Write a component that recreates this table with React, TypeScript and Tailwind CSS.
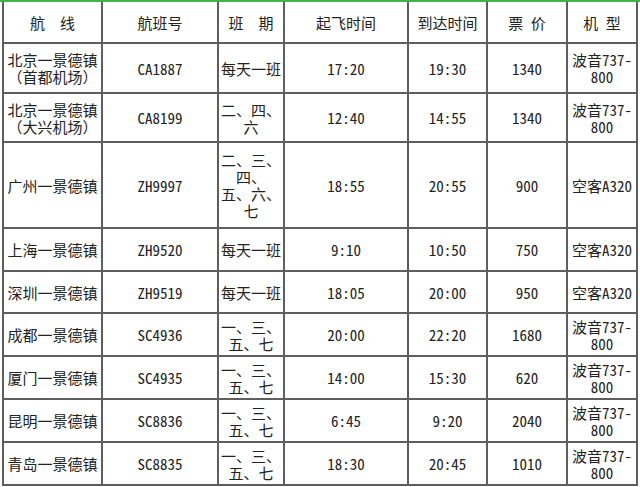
import React from "react";

type Row = {
  route: string[];
  no: string;
  sched: string[];
  dep: string;
  arr: string;
  price: string;
  type: string[];
};

const boeing = ["波音737-", "800"];
const airbus = ["空客A320"];
const wk = ["一、三、", "五、七"];

const rows: Row[] = [
  { route: ["北京一景德镇", "（首都机场）"], no: "CA1887", sched: ["每天一班"], dep: "17:20", arr: "19:30", price: "1340", type: boeing },
  { route: ["北京一景德镇", "（大兴机场）"], no: "CA8199", sched: ["二、四、", "六"], dep: "12:40", arr: "14:55", price: "1340", type: boeing },
  { route: ["广州一景德镇"], no: "ZH9997", sched: ["二、三、", "四、", "五、六、", "七"], dep: "18:55", arr: "20:55", price: "900", type: airbus },
  { route: ["上海一景德镇"], no: "ZH9520", sched: ["每天一班"], dep: "9:10", arr: "10:50", price: "750", type: airbus },
  { route: ["深圳一景德镇"], no: "ZH9519", sched: ["每天一班"], dep: "18:05", arr: "20:00", price: "950", type: airbus },
  { route: ["成都一景德镇"], no: "SC4936", sched: wk, dep: "20:00", arr: "22:20", price: "1680", type: boeing },
  { route: ["厦门一景德镇"], no: "SC4935", sched: wk, dep: "14:00", arr: "15:30", price: "620", type: boeing },
  { route: ["昆明一景德镇"], no: "SC8836", sched: wk, dep: "6:45", arr: "9:20", price: "2040", type: boeing },
  { route: ["青岛一景德镇"], no: "SC8835", sched: wk, dep: "18:30", arr: "20:45", price: "1010", type: boeing },
];

const headers = ["航　线", "航班号", "班　期", "起飞时间", "到达时间", "票 价", "机 型"];

function Cell({ lines }: { lines: string[] }) {
  return (
    <div className="bg-white flex flex-col items-center justify-center text-center leading-[17px] whitespace-nowrap overflow-hidden">
      {lines.map((l, i) => (
        <span key={i}>{l}</span>
      ))}
    </div>
  );
}

export default function App() {
  return (
    <div className="w-[640px] h-[487px] bg-white overflow-hidden text-[15px] text-[#222] font-['Noto_Sans_Mono_CJK_SC','Noto_Sans_CJK_SC',sans-serif]">
      <div className="h-[2px] w-full bg-[#43b048]" />
      <div className="ml-[2px] w-[636px] grid grid-cols-[97px_114px_64px_122px_77px_78px_68px] grid-rows-[40px_48px_47px_84px_41px_40px_41px_41px_41px_41px] gap-[2px] px-[2px] pb-[2px] bg-[#5e5e5e]">
        {headers.map((h, i) => (
          <Cell key={"h" + i} lines={[h]} />
        ))}
        {rows.map((r, i) => (
          <React.Fragment key={i}>
            <Cell lines={r.route} />
            <Cell lines={[r.no]} />
            <Cell lines={r.sched} />
            <Cell lines={[r.dep]} />
            <Cell lines={[r.arr]} />
            <Cell lines={[r.price]} />
            <Cell lines={r.type} />
          </React.Fragment>
        ))}
      </div>
    </div>
  );
}
